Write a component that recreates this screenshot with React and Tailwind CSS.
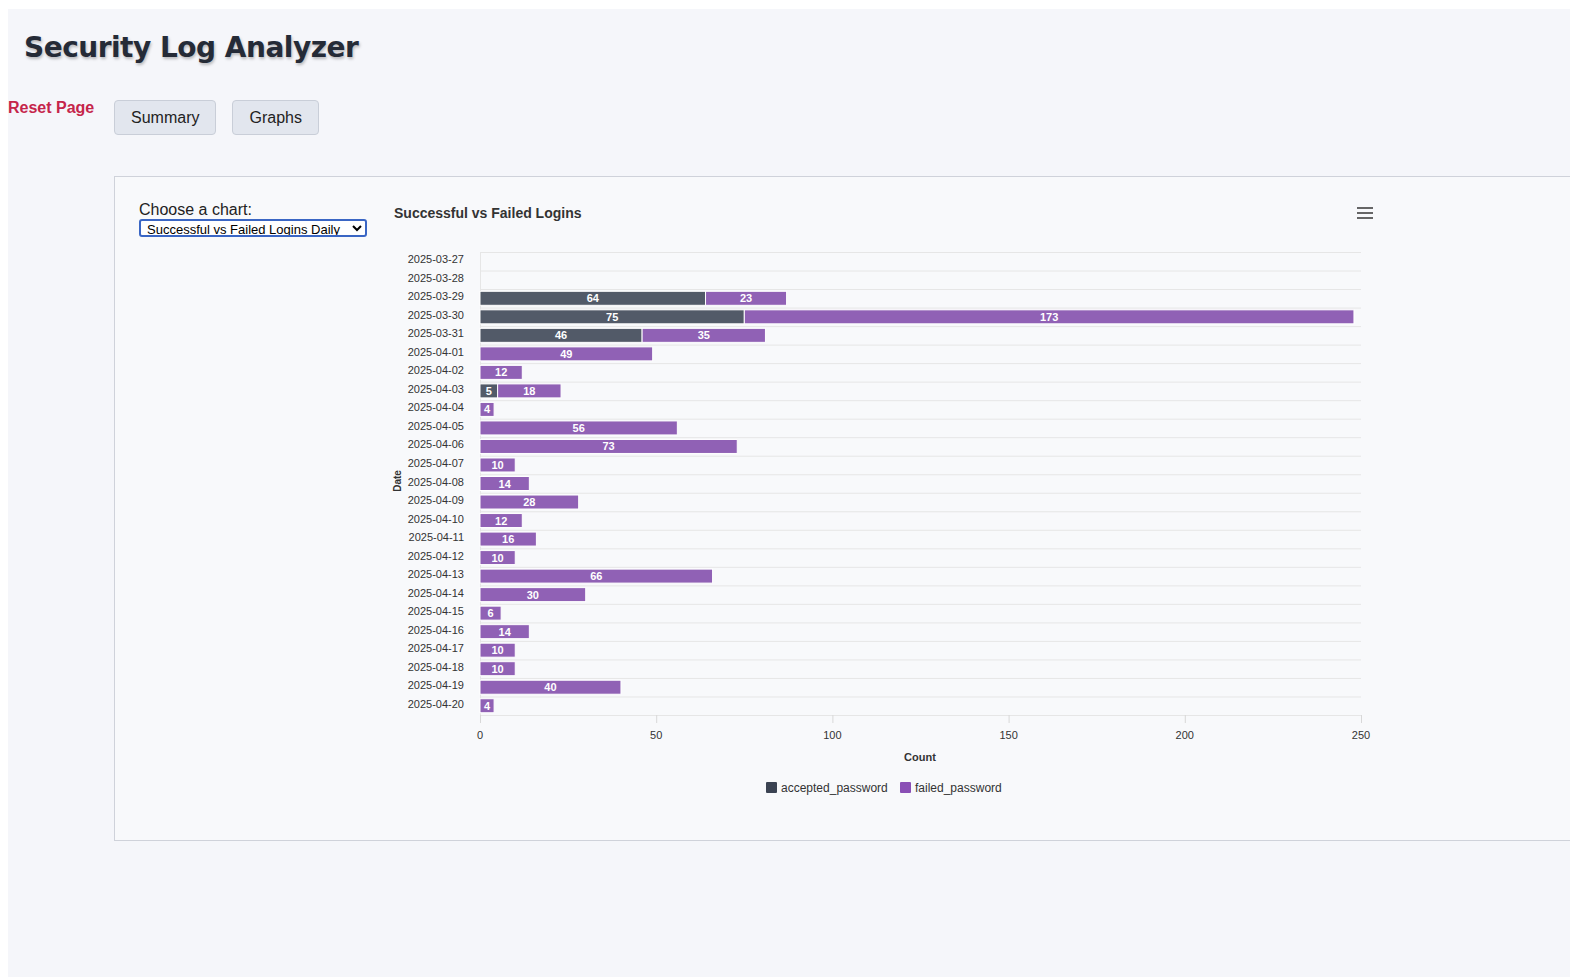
import React from 'react';

const dates = [
	'2025-03-27', '2025-03-28', '2025-03-29', '2025-03-30', '2025-03-31', '2025-04-01', '2025-04-02',
	'2025-04-03', '2025-04-04', '2025-04-05', '2025-04-06', '2025-04-07', '2025-04-08', '2025-04-09',
	'2025-04-10', '2025-04-11', '2025-04-12', '2025-04-13', '2025-04-14', '2025-04-15', '2025-04-16',
	'2025-04-17', '2025-04-18', '2025-04-19', '2025-04-20',
];
const accepted = [0, 0, 64, 75, 46, 0, 0, 5, 0, 0, 0, 0, 0, 0, 0, 0, 0, 0, 0, 0, 0, 0, 0, 0, 0];
const failed = [0, 0, 23, 173, 35, 49, 12, 18, 4, 56, 73, 10, 14, 28, 12, 16, 10, 66, 30, 6, 14, 10, 10, 40, 4];

const PL = 96;
const PR = 977;
const PT = 61;
const PB = 524;
const rowH = (PB - PT) / dates.length;
const sx = (v) => (v * (PR - PL)) / 250;

const Chart = () => (
	<svg width="1000" height="620" className="block" style={{ fontFamily: '"Liberation Sans", Arial, sans-serif' }}>
		<text x="10" y="27" fontSize="14" fontWeight="bold" fill="#333">Successful vs Failed Logins</text>
		<g stroke="#666" strokeWidth="2">
			<line x1="973" y1="17" x2="989" y2="17" />
			<line x1="973" y1="22" x2="989" y2="22" />
			<line x1="973" y1="27" x2="989" y2="27" />
		</g>
		{dates.map((d, i) => (
			<line key={'g' + i} x1={PL} x2={PR} y1={PT + rowH * i + 0.5} y2={PT + rowH * i + 0.5} stroke="#e6e6e6" />
		))}
		<line x1={PL} x2={PR} y1={PB + 0.5} y2={PB + 0.5} stroke="#e6e6e6" />
		<line x1={PL + 0.5} x2={PL + 0.5} y1={PT} y2={PB} stroke="#e6e6e6" />
		{[0, 50, 100, 150, 200, 250].map((t) => (
			<g key={t}>
				<line x1={PL + sx(t) + 0.5} x2={PL + sx(t) + 0.5} y1={PB} y2={PB + 8} stroke="#d8d8d8" />
				<text x={PL + sx(t)} y={548} fontSize="11" fill="#333" textAnchor="middle">{t}</text>
			</g>
		))}
		{dates.map((d, i) => {
			const cy = PT + rowH * (i + 0.5);
			const a = accepted[i];
			const f = failed[i];
			const bt = cy - 7;
			return (
				<g key={d}>
					<text x="80" y={cy + 2} fontSize="11" fill="#333" textAnchor="end">{d}</text>
					{a > 0 && (
						<g>
							<rect x={PL} y={bt} width={sx(a)} height="14" fill="#525a68" stroke="#fff" strokeWidth="1" />
							<text x={PL + sx(a) / 2} y={cy + 4} fontSize="11" fontWeight="bold" fill="#fff" textAnchor="middle">{a}</text>
						</g>
					)}
					{f > 0 && (
						<g>
							<rect x={PL + sx(a)} y={bt} width={sx(f)} height="14" fill="#9061b5" stroke="#fff" strokeWidth="1" />
							<text x={PL + sx(a) + sx(f) / 2} y={cy + 4} fontSize="11" fontWeight="bold" fill="#fff" textAnchor="middle">{f}</text>
						</g>
					)}
				</g>
			);
		})}
		<text x="536" y="570" fontSize="11" fontWeight="bold" fill="#333" textAnchor="middle">Count</text>
		<text x="0" y="0" fontSize="10" fontWeight="bold" fill="#333" textAnchor="middle" transform="translate(17 290) rotate(-90)">Date</text>
		<rect x="382" y="591" width="11" height="11" rx="1" fill="#3b4352" />
		<text x="397" y="601" fontSize="12" fill="#333">accepted_password</text>
		<rect x="516" y="591" width="11" height="11" rx="1" fill="#8a4fb5" />
		<text x="531" y="601" fontSize="12" fill="#333">failed_password</text>
	</svg>
);

const App = () => (
	<div className="bg-white pt-[9px] pl-[8px] min-h-[979px] font-['Liberation_Sans',Arial,sans-serif]">
		<div className="bg-[#f5f6fa] h-[968px] overflow-hidden">
			<h1 className="pl-[16px] pt-[20px] text-[28px] leading-[38px] font-bold text-[#252b37] font-['DejaVu_Sans',Verdana,sans-serif] tracking-[-0.5px] [text-shadow:1px_2px_3px_rgba(0,0,0,0.25)]">
				Security Log Analyzer
			</h1>
			<div className="flex items-start mt-[32px]">
				<a href="#" className="text-[#c5254a] font-bold text-[16px] leading-[18px] w-[106px]">Reset Page</a>
				<button className="h-[35px] px-[16px] bg-[#e2e6ee] border border-[#c9ced8] rounded-[4px] text-[16px] text-[#222] mt-[1px]">Summary</button>
				<button className="h-[35px] px-[16px] ml-[16px] bg-[#e2e6ee] border border-[#c9ced8] rounded-[4px] text-[16px] text-[#222] mt-[1px]">Graphs</button>
			</div>
			<div className="ml-[106px] mt-[41px] w-[1480px] h-[665px] border border-[#cfd2da] bg-[#f8f9fb] flex">
				<div className="pl-[24px] pt-[24px] w-[269px] shrink-0">
					<label className="block text-[16px] leading-[18px] text-[#222]">Choose a chart:</label>
					<select className="block w-[228px] h-[18px] text-[13px] leading-[14px] border-2 border-[#3a66c4] rounded-[3px] bg-white text-black pl-[2px]">
						<option>Successful vs Failed Logins Daily</option>
					</select>
				</div>
				<div className="pt-[14px] shrink-0">
					<Chart />
				</div>
			</div>
		</div>
	</div>
);

export default App;
